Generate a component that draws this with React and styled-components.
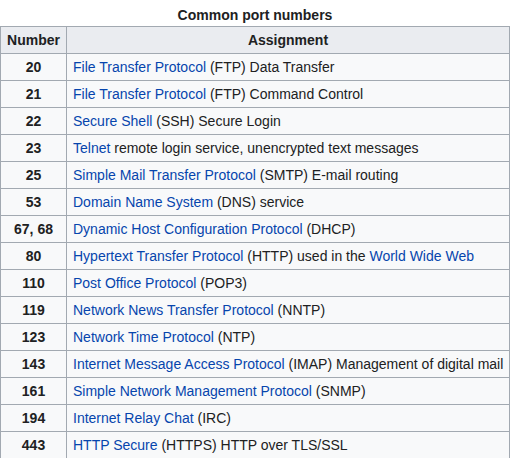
import React from 'react'
import styled, { createGlobalStyle } from 'styled-components'

const Global = createGlobalStyle`
html, body {
margin:0;
padding:0;
background:#fff;
}
body{
font-family:"Liberation Sans", Arial, sans-serif;
font-size:14px;
color:#202122;
}
`

const ports = [
    { n: '20', parts: [['File Transfer Protocol', true], [' (FTP) Data Transfer']] },
    { n: '21', parts: [['File Transfer Protocol', true], [' (FTP) Command Control']] },
    { n: '22', parts: [['Secure Shell', true], [' (SSH) Secure Login']] },
    { n: '23', parts: [['Telnet', true], [' remote login service, unencrypted text messages']] },
    { n: '25', parts: [['Simple Mail Transfer Protocol', true], [' (SMTP) E-mail routing']] },
    { n: '53', parts: [['Domain Name System', true], [' (DNS) service']] },
    { n: '67, 68', parts: [['Dynamic Host Configuration Protocol', true], [' (DHCP)']] },
    { n: '80', parts: [['Hypertext Transfer Protocol', true], [' (HTTP) used in the '], ['World Wide Web', true]] },
    { n: '110', parts: [['Post Office Protocol', true], [' (POP3)']] },
    { n: '119', parts: [['Network News Transfer Protocol', true], [' (NNTP)']] },
    { n: '123', parts: [['Network Time Protocol', true], [' (NTP)']] },
    { n: '143', parts: [['Internet Message Access Protocol', true], [' (IMAP) Management of digital mail']] },
    { n: '161', parts: [['Simple Network Management Protocol', true], [' (SNMP)']] },
    { n: '194', parts: [['Internet Relay Chat', true], [' (IRC)']] },
    { n: '443', parts: [['HTTP Secure', true], [' (HTTPS) HTTP over TLS/SSL']] },
]

const App = () => {
    return <Wrapper>
        <Global />
        <Table>
            <Caption>Common port numbers</Caption>
            <colgroup>
                <col style={{ width: 66 }} />
                <col />
            </colgroup>
            <thead>
                <tr>
                    <HeadCell>Number</HeadCell>
                    <HeadCell>Assignment</HeadCell>
                </tr>
            </thead>
            <tbody>
                {ports.map((p) => (
                    <tr key={p.n}>
                        <Cell $num>{p.n}</Cell>
                        <Cell>
                            {p.parts.map(([text, link], i) =>
                                link ? <Link key={i} href="#">{text}</Link> : <span key={i}>{text}</span>
                            )}
                        </Cell>
                    </tr>
                ))}
            </tbody>
        </Table>
    </Wrapper>
}

const Wrapper = styled.div`
width:510px;
`

const Table = styled.table`
width:510px;
border-collapse:collapse;
table-layout:fixed;
background:#f8f9fa;
color:#202122;
`

const Caption = styled.caption`
font-weight:bold;
padding:4px 0 0;
line-height:22px;
background:#fff;
`

const HeadCell = styled.th`
background:#eaecf0;
border:1px solid #a2a9b1;
height:26px;
padding:0 5px;
font-weight:bold;
text-align:center;
`

const Cell = styled.td`
border:1px solid #a2a9b1;
height:26px;
padding:0 6px;
white-space:nowrap;
text-align:${(p) => (p.$num ? 'center' : 'left')};
font-weight:${(p) => (p.$num ? 'bold' : 'normal')};
`

const Link = styled.a`
color:#0645ad;
text-decoration:none;
`

export default App
